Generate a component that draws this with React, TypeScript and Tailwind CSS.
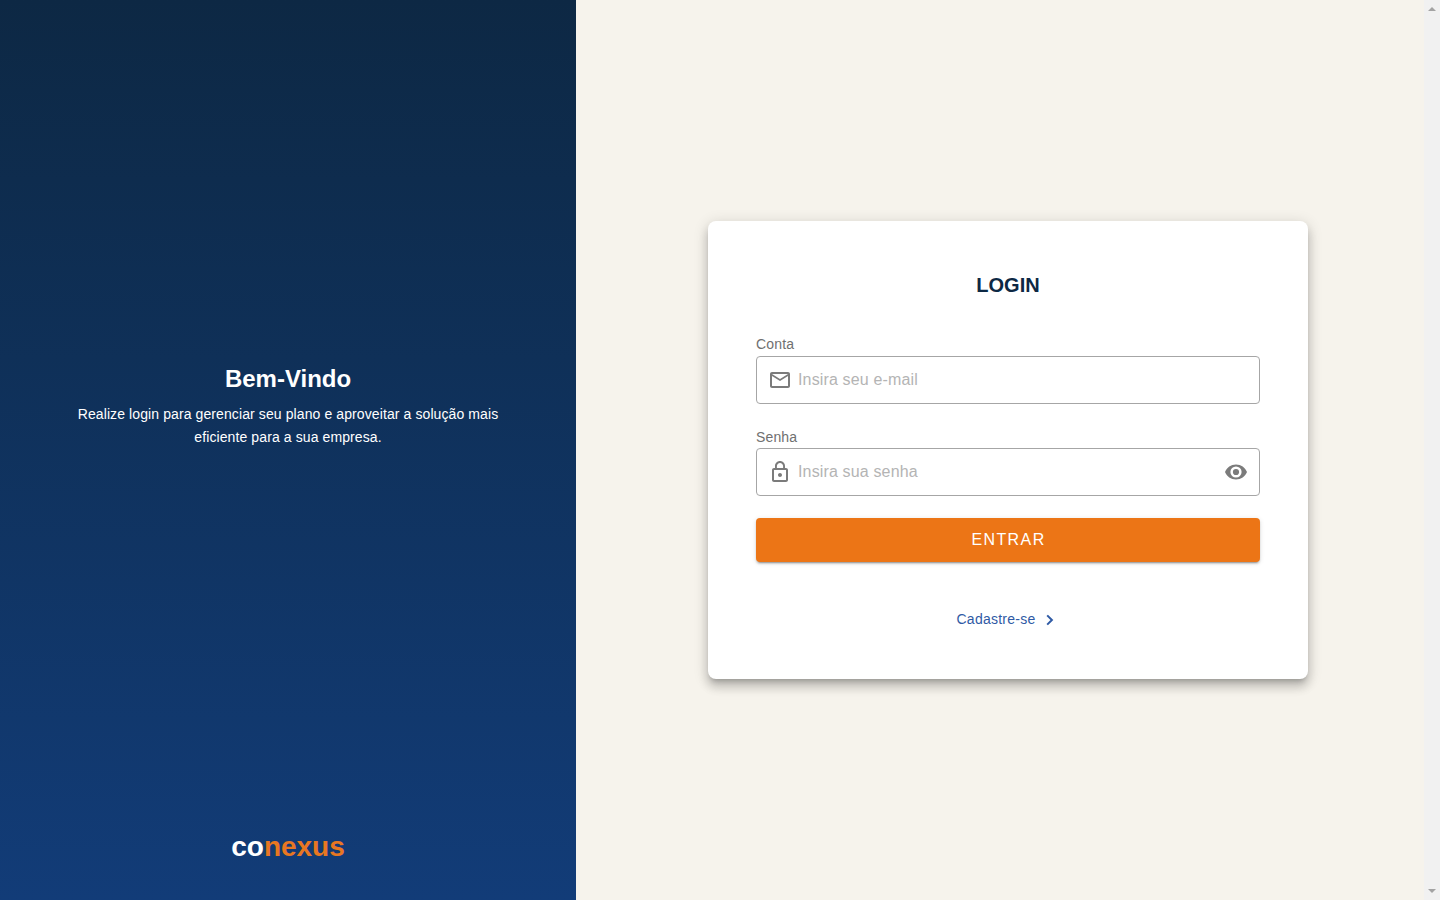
import { MdOutlineEmail, MdLockOutline } from "react-icons/md";

const FONT = "font-['Liberation_Sans',Arial,sans-serif]";

function EyeIcon() {
  return (
    <svg width="24" height="24" viewBox="0 0 24 24" fill="currentColor">
      <path
        fillRule="evenodd"
        d="M12 4.5C7 4.5 2.73 7.61 1 12c1.73 4.39 6 7.5 11 7.5s9.27-3.11 11-7.5c-1.73-4.39-6-7.5-11-7.5zM12 17.6a5.6 5.6 0 1 1 0-11.2 5.6 5.6 0 0 1 0 11.2z"
      />
      <circle cx="12" cy="12" r="3.1" />
    </svg>
  );
}

function ChevronIcon() {
  return (
    <svg width="20" height="20" viewBox="0 0 20 20" fill="none" stroke="currentColor" strokeWidth="2" className="mt-0.5 ml-1">
      <path d="M7.2 5.4L11.9 10L7.2 14.6" />
    </svg>
  );
}

export default function App() {
  return (
    <div className={`flex h-[900px] w-[1440px] overflow-hidden bg-[#f6f3ec] ${FONT}`}>
      <aside className="flex w-[576px] flex-col items-center bg-linear-to-b from-[#0d2844] to-[#123c78] text-white">
        <div className="flex flex-1 flex-col items-center pt-[361px] text-center">
          <h1 className="text-[24px] leading-[36px] font-bold">Bem-Vindo</h1>
          <p className="mt-[6px] w-[430px] text-[14px] leading-[23px] tracking-[0.1px]">
            Realize login para gerenciar seu plano e aproveitar a solução mais eficiente para a sua empresa.
          </p>
        </div>
        <div className="pb-[36px] text-[28px] leading-[34px] font-bold">
          co<span className="text-[#e87722]">nexus</span>
        </div>
      </aside>
      <main className="flex flex-1 justify-center pt-[221px] pl-4">
        <form className="flex h-[458px] w-[600px] flex-col rounded-lg bg-white px-12 pt-12 shadow-[0px_5px_5px_-3px_rgba(0,0,0,0.2),0px_8px_10px_1px_rgba(0,0,0,0.14),0px_3px_14px_2px_rgba(0,0,0,0.12)]">
          <h2 className="text-center text-[20px] leading-8 font-bold text-[#0d2844]">LOGIN</h2>
          <label className="mt-[32px] mb-px text-[14px] leading-[22px] tracking-[0.15px] text-[#707070]">Conta</label>
          <div className="flex h-12 items-center rounded border border-[#a6a6a6] px-[11px] text-[#7b7b7b]">
            <MdOutlineEmail size={24} />
            <input className="ml-1.5 flex-1 text-[16px] tracking-[0.15px] outline-none placeholder:text-[#b4b4b4]" placeholder="Insira seu e-mail" />
          </div>
          <label className="mt-[22px] text-[14px] leading-[22px] tracking-[0.15px] text-[#707070]">Senha</label>
          <div className="flex h-12 items-center rounded border border-[#a6a6a6] px-[11px] text-[#7b7b7b]">
            <MdLockOutline size={24} />
            <input type="password" className="ml-1.5 flex-1 text-[16px] tracking-[0.15px] outline-none placeholder:text-[#b4b4b4]" placeholder="Insira sua senha" />
            <EyeIcon />
          </div>
          <button type="button" className="mt-[22px] h-11 rounded bg-[#ec7516] pl-px text-[16px] tracking-[1.4px] text-white shadow-[0px_3px_1px_-2px_rgba(0,0,0,0.2),0px_2px_2px_0px_rgba(0,0,0,0.14),0px_1px_5px_0px_rgba(0,0,0,0.12)]">
            ENTRAR
          </button>
          <a className="mt-[45px] flex items-center justify-center text-[14px] leading-[24px] tracking-[0.25px] text-[#2f5aa5]">
            Cadastre-se
            <ChevronIcon />
          </a>
        </form>
      </main>
      <div className="flex w-4 flex-col items-center justify-between bg-[#f1f1f1] py-[7px] text-[#a3a3a3]">
        <svg width="8" height="4" viewBox="0 0 8 4" fill="currentColor"><path d="M0 4L4 0L8 4Z" /></svg>
        <svg width="8" height="4" viewBox="0 0 8 4" fill="currentColor"><path d="M0 0L4 4L8 0Z" /></svg>
      </div>
    </div>
  );
}
